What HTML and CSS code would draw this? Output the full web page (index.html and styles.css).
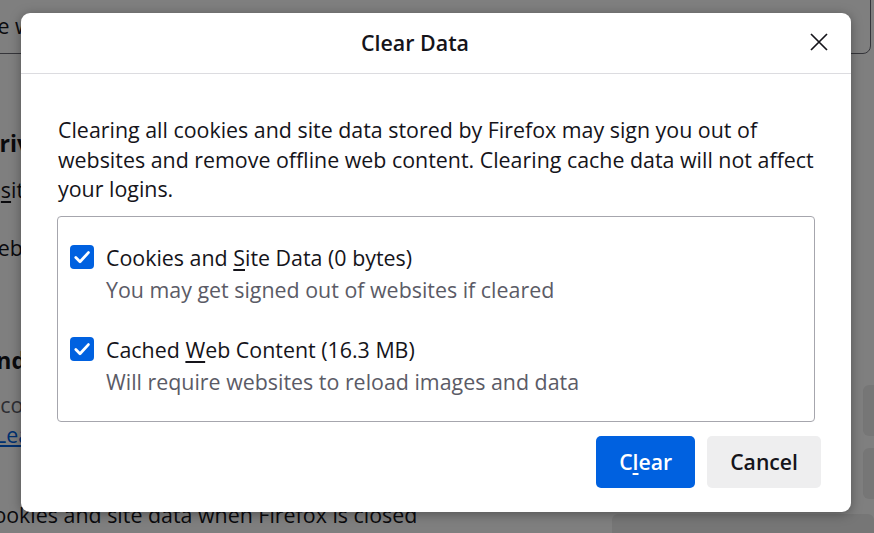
FILE: index.html
```html
<!DOCTYPE html>
<html lang="en">
<head>
<meta charset="utf-8">
<title>Clear Data</title>
<link rel="stylesheet" href="styles.css">
</head>
<body>
<div class="page">
  <div class="topbar"><span class="topbar-text">Some websites</span></div>
  <h2 class="bg-h2 ind-priv">Privacy</h2>
  <p class="bg-p ind-web">Web<span class="ak">s</span>ite Privacy Preferences</p>
  <p class="bg-p ind-w">Websites may track you</p>
  <div class="bg-row">
    <div class="bg-col">
      <h2 class="bg-h2 ind-cook">Cookies and Site Data</h2>
      <p class="bg-p bg-sub ind-stored">Your stored cookies, site data, and cache</p>
      <a class="bg-link ind-learn">Learn more</a>
    </div>
    <div class="bg-btns">
      <span class="bg-btn">Clear Data…</span>
      <span class="bg-btn">Manage Data…</span>
    </div>
  </div>
  <div class="bg-last">
    <span class="bg-p ind-del">Delete cookies and site data when Firefox is closed</span>
    <span class="bg-btn bg-btn-wide">Manage Exceptions…</span>
  </div>
</div>
<div class="overlay"></div>
<div class="dialog" role="dialog">
  <div class="dlg-head">
    <span class="dlg-title">Clear Data</span>
    <button class="close" aria-label="Close">
      <svg width="18" height="18" viewBox="0 0 18 18"><path d="M1 1 L17 17 M17 1 L1 17" stroke="#15141a" stroke-width="1.7" fill="none"/></svg>
    </button>
  </div>
  <div class="dlg-body">
    <p class="desc">Clearing all cookies and site data stored by Firefox may sign you out of websites and remove offline web content. Clearing cache data will not affect your logins.</p>
    <div class="group">
      <div class="item">
        <div class="row">
          <svg class="cb" width="24" height="24" viewBox="0 0 24 24"><rect width="24" height="24" rx="4" fill="#0061e0"/><path d="M5.8 12.6 L10 16.8 L18.4 7.6" stroke="#fff" stroke-width="2.8" fill="none" stroke-linecap="round" stroke-linejoin="round"/></svg>
          <span class="label">Cookies and <span class="ak">S</span>ite Data (0 bytes)</span>
        </div>
        <div class="hint">You may get signed out of websites if cleared</div>
      </div>
      <div class="item">
        <div class="row">
          <svg class="cb" width="24" height="24" viewBox="0 0 24 24"><rect width="24" height="24" rx="4" fill="#0061e0"/><path d="M5.8 12.6 L10 16.8 L18.4 7.6" stroke="#fff" stroke-width="2.8" fill="none" stroke-linecap="round" stroke-linejoin="round"/></svg>
          <span class="label">Cached <span class="ak">W</span>eb Content (16.3 MB)</span>
        </div>
        <div class="hint">Will require websites to reload images and data</div>
      </div>
    </div>
  </div>
  <div class="dlg-foot">
    <button class="btn btn-primary">C<span class="ak">l</span>ear</button>
    <button class="btn btn-secondary">Cancel</button>
  </div>
</div>
</body>
</html>
```
FILE: styles.css
```css
* { box-sizing: border-box; }
html, body { margin: 0; padding: 0; }
body {
  width: 874px;
  height: 533px;
  overflow: hidden;
  position: relative;
  font-family: "Open Sans", "Noto Sans", sans-serif;
  color: #15141a;
  background: #fff;
}

/* background page */
.page {
  height: 533px;
  overflow: hidden;
  background: #fff;
  font-size: 21.4px;
}
.topbar {
  margin: -12px 3px 0 -20px;
  height: 66px;
  border: 1px solid #6a6a74;
  border-radius: 0 0 8px 8px;
  display: flex;
  align-items: center;
  padding-top: 8px;
}
.topbar-text { text-indent: -28px; }
.bg-h2 {
  margin: 0;
  font-size: 23px;
  font-weight: 700;
  line-height: 30px;
  white-space: nowrap;
}
.bg-p {
  margin: 0;
  line-height: 30px;
  white-space: nowrap;
}
.bg-sub { color: #5b5b66; }
.ind-priv { margin-top: 74px; text-indent: -15px; }
.ind-web { margin-top: 17px; text-indent: -44px; }
.ind-w { margin-top: 28px; text-indent: -22px; }
.bg-row {
  display: flex;
  justify-content: space-between;
  margin-top: 82px;
}
.bg-col { display: flex; flex-direction: column; }
.ind-cook { text-indent: -113px; }
.ind-stored { margin-top: 15px; text-indent: -122px; }
.bg-link {
  line-height: 30px;
  color: #0061e0;
  text-decoration: underline;
  margin-left: -5px;
}
.bg-btns {
  display: flex;
  flex-direction: column;
  gap: 12px;
  margin-top: 40px;
  width: 11px;
  overflow: hidden;
}
.bg-btn {
  display: block;
  height: 51px;
  background: #ececec;
  border-radius: 6px;
  white-space: nowrap;
  padding: 10px 18px;
  color: #ececec;
}
.bg-last {
  display: flex;
  align-items: flex-start;
  margin-top: 1px;
}
.ind-del { text-indent: -87px; width: 612px; overflow: hidden; }
.bg-btn-wide { margin-top: 14px; flex: 1; }

.ak { text-decoration: underline; text-underline-offset: 3px; }

.overlay {
  position: absolute;
  inset: 0;
  background: rgba(0, 0, 0, 0.5);
}

/* dialog */
.dialog {
  position: absolute;
  left: 21px;
  top: 13px;
  width: 830px;
  height: 499px;
  background: #fff;
  border-radius: 9px;
  box-shadow: 0 2px 12px rgba(0, 0, 0, 0.35);
  display: flex;
  flex-direction: column;
  font-size: 21.4px;
}
.dlg-head {
  height: 61px;
  border-bottom: 1px solid #dcdce0;
  display: flex;
  align-items: center;
  padding: 0 16px 0 6px;
}
.dlg-title {
  flex: 1;
  text-align: center;
  font-size: 21.4px;
  font-weight: 600;
  line-height: 30px;
  margin-top: -1px;
}
.close {
  flex: none;
  width: 32px;
  height: 32px;
  margin-top: -3px;
  border: 0;
  background: transparent;
  padding: 0;
  display: flex;
  align-items: center;
  justify-content: center;
}
.dlg-body {
  padding: 41px 36px 0 36px;
}
.desc {
  margin: 0 0 0 1px;
  line-height: 29.6px;
}
.group {
  margin-top: 12px;
  border: 1px solid #a6a6ad;
  border-radius: 4px;
  height: 206px;
  padding: 26px 12px 0 12px;
  display: flex;
  flex-direction: column;
  gap: 30px;
}
.row {
  display: flex;
  align-items: center;
  gap: 12px;
  line-height: 30px;
}
.cb { flex: none; margin-top: -1px; }
.hint {
  color: #5b5b66;
  line-height: 30px;
  margin-top: 2px;
  padding-left: 36px;
}
.dlg-foot {
  display: flex;
  justify-content: flex-end;
  gap: 12px;
  padding: 14px 30px 23px 0;
}
.btn {
  height: 52px;
  border: 0;
  border-radius: 5px;
  padding: 0 23px;
  font-family: "Open Sans", "Noto Sans", sans-serif;
  font-size: 21.2px;
  font-weight: 600;
}
.btn-primary { background: #0061e0; color: #fff; }
.btn-secondary { background: #eeeeef; color: #15141a; }
```
